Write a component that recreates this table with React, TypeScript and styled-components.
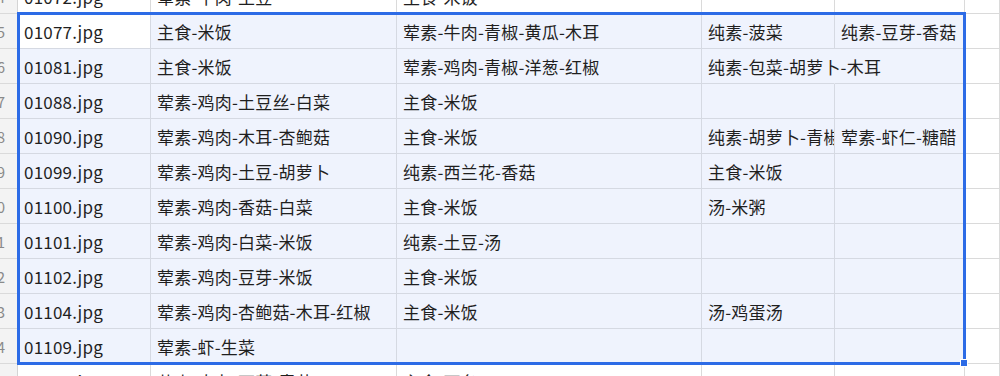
import React from "react";
import styled, { createGlobalStyle } from "styled-components";

const Global = createGlobalStyle`
  html, body { margin: 0; padding: 0; background: #ffffff; overflow: hidden; }
  body { font-family: "Noto Sans CJK SC", "Noto Sans", sans-serif; }
`;

const Sheet = styled.div`
  position: relative;
  margin-top: -21px;
  width: 1000px;
  display: flex;
  flex-direction: column;
`;

const Row = styled.div`
  display: grid;
  grid-template-columns: 18px 133px 246px 305px 133px 130px 1fr;
  height: 35px;
`;

const RowHead = styled.div`
  box-sizing: border-box;
  background: #f3f3f3;
  border-right: 1px solid #d4d4d4;
  border-bottom: 1px solid #dadada;
  display: flex;
  align-items: center;
  justify-content: flex-end;
  padding-right: 12px;
  overflow: hidden;
  color: #8a8a8a;
  font-size: 15px;
  white-space: nowrap;
`;

const Cell = styled.div<{ $sel?: boolean; $active?: boolean; $spill?: boolean; $noRight?: boolean }>`
  box-sizing: border-box;
  background: ${(p) => (p.$sel && !p.$active ? "#eff3fd" : "#ffffff")};
  border-right: 1px solid ${(p) => (p.$noRight ? "transparent" : p.$sel ? "#d5d9e2" : "#dadada")};
  border-bottom: 1px solid ${(p) => (p.$sel ? "#d5d9e2" : "#dadada")};
  display: flex;
  align-items: center;
  padding-left: 6px;
  white-space: nowrap;
  overflow: ${(p) => (p.$spill ? "visible" : "hidden")};
  z-index: ${(p) => (p.$spill ? 1 : 0)};
  font-size: 17px;
  color: #1f1f1f;
  letter-spacing: 0.2px;
`;

const Selection = styled.div`
  position: absolute;
  left: 17px;
  top: 33px;
  width: 949px;
  height: 353px;
  box-sizing: border-box;
  border: 3px solid #2c6be6;
  pointer-events: none;
  z-index: 5;
`;

const Handle = styled.div`
  position: absolute;
  right: -5px;
  bottom: -5px;
  width: 6px;
  height: 6px;
  background: #2c6be6;
  border: 1px solid #ffffff;
`;

type RowData = { n: string; cells: string[]; spill?: number[] };

const rows: RowData[] = [
  { n: "74", cells: ["01072.jpg", "荤素-牛肉-土豆", "主食-米饭", "", "", ""] },
  { n: "75", cells: ["01077.jpg", "主食-米饭", "荤素-牛肉-青椒-黄瓜-木耳", "纯素-菠菜", "纯素-豆芽-香菇", ""] },
  { n: "76", cells: ["01081.jpg", "主食-米饭", "荤素-鸡肉-青椒-洋葱-红椒", "纯素-包菜-胡萝卜-木耳", "", ""], spill: [3] },
  { n: "77", cells: ["01088.jpg", "荤素-鸡肉-土豆丝-白菜", "主食-米饭", "", "", ""] },
  { n: "78", cells: ["01090.jpg", "荤素-鸡肉-木耳-杏鲍菇", "主食-米饭", "纯素-胡萝卜-青椒", "荤素-虾仁-糖醋", ""] },
  { n: "79", cells: ["01099.jpg", "荤素-鸡肉-土豆-胡萝卜", "纯素-西兰花-香菇", "主食-米饭", "", ""] },
  { n: "80", cells: ["01100.jpg", "荤素-鸡肉-香菇-白菜", "主食-米饭", "汤-米粥", "", ""] },
  { n: "81", cells: ["01101.jpg", "荤素-鸡肉-白菜-米饭", "纯素-土豆-汤", "", "", ""] },
  { n: "82", cells: ["01102.jpg", "荤素-鸡肉-豆芽-米饭", "主食-米饭", "", "", ""] },
  { n: "83", cells: ["01104.jpg", "荤素-鸡肉-杏鲍菇-木耳-红椒", "主食-米饭", "汤-鸡蛋汤", "", ""] },
  { n: "84", cells: ["01109.jpg", "荤素-虾-生菜", "", "", "", ""] },
  { n: "85", cells: ["01110.jpg", "荤素-肉丸-西芹-青菜", "主食-面条", "", "", ""] },
];

export default function App() {
  return (
    <>
      <Global />
      <Sheet>
        {rows.map((r, ri) => {
          const inSel = ri >= 1 && ri <= 10;
          return (
            <Row key={r.n}>
              <RowHead>{r.n}</RowHead>
              {r.cells.map((c, ci) => {
                const sel = inSel && ci <= 4;
                const spill = r.spill?.includes(ci);
                return (
                  <Cell
                    key={ci}
                    $sel={sel}
                    $active={ri === 1 && ci === 0}
                    $spill={spill}
                    $noRight={spill}
                  >
                    {c}
                  </Cell>
                );
              })}
            </Row>
          );
        })}
        <Selection>
          <Handle />
        </Selection>
      </Sheet>
    </>
  );
}
